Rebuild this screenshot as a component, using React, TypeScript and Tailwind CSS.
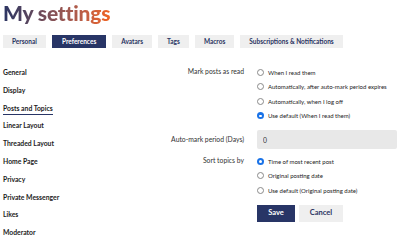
import { useState } from 'react';

const tabs = ['Personal', 'Preferences', 'Avatars', 'Tags', 'Macros', 'Subscriptions & Notifications'];

const sideItems = [
  'General',
  'Display',
  'Posts and Topics',
  'Linear Layout',
  'Threaded Layout',
  'Home Page',
  'Privacy',
  'Private Messenger',
  'Likes',
  'Moderator',
];

const markOptions = [
  'When I read them',
  'Automatically, after auto-mark period expires',
  'Automatically, when I log off',
  'Use default (When I read them)',
];

const sortOptions = ['Time of most recent post', 'Original posting date', 'Use default (Original posting date)'];

function Radio({ label, checked, onClick }: { label: string; checked: boolean; onClick: () => void }) {
  return (
    <label className="flex h-[14.5px] cursor-pointer items-center gap-[4px]" onClick={onClick}>
      {checked ? (
        <span className="flex h-[7px] w-[7px] items-center justify-center rounded-full bg-[#1a73e8]">
          <span className="h-[2.5px] w-[2.5px] rounded-full bg-white" />
        </span>
      ) : (
        <span className="h-[7px] w-[7px] rounded-full border border-[#8a8a8a] bg-white" />
      )}
      <span className="text-[6px] text-[#222]">{label}</span>
    </label>
  );
}

export default function App() {
  const [mark, setMark] = useState(3);
  const [sort, setSort] = useState(0);

  return (
    <div className="h-[242px] w-[400px] overflow-hidden bg-white font-['Lato','Open_Sans',sans-serif]">
      {/* Title */}
      <div className="flex pl-[3px] pt-[1px]">
        <h1 className="bg-gradient-to-r from-[#2a3462] to-[#f0641f] bg-clip-text pb-[2px] text-[21px] font-black leading-[24px] tracking-[-0.2px] text-transparent">
          My settings
        </h1>
      </div>

      {/* Tabs */}
      <div className="ml-[3px] mt-[8px] flex gap-[6px]">
        {tabs.map((t) => (
          <div
            key={t}
            className={
              t === 'Preferences'
                ? 'flex h-[13px] items-center bg-[#283566] px-[10px] text-[6.5px] font-bold text-white'
                : 'flex h-[13px] items-center bg-[#efefef] px-[9px] text-[6.5px] font-bold text-[#2a3462]'
            }
          >
            {t}
          </div>
        ))}
      </div>

      <div className="mt-[17px] flex">
        {/* Sidebar */}
        <div className="flex w-[140px] flex-col pl-[3px]">
          {sideItems.map((s) => (
            <div key={s} className="flex h-[17.8px] items-start pt-[3px]">
              <span
                className={
                  s === 'Posts and Topics'
                    ? 'border-b-[1.5px] border-[#283566] pb-[2px] text-[6.8px] font-bold leading-[8px] text-[#1c1c1c]'
                    : 'text-[6.8px] font-bold leading-[8px] text-[#1c1c1c]'
                }
              >
                {s}
              </span>
            </div>
          ))}
        </div>

        {/* Main form */}
        <div className="flex flex-1 flex-col">
          <div className="flex">
            <div className="w-[117px] pr-[13px] pt-[1px] text-right text-[6.8px] text-[#333]">Mark posts as read</div>
            <div className="flex flex-col">
              {markOptions.map((o, i) => (
                <Radio key={o} label={o} checked={mark === i} onClick={() => setMark(i)} />
              ))}
            </div>
          </div>

          <div className="mt-[7px] flex items-center">
            <div className="w-[117px] pr-[13px] text-right text-[6.8px] text-[#333]">Auto-mark period (Days)</div>
            <input
              defaultValue="0"
              className="h-[19px] w-[140px] rounded-[2px] bg-[#e8e8e8] px-[6px] text-[6.8px] text-[#333] outline-none"
            />
          </div>

          <div className="mt-[5px] flex">
            <div className="w-[117px] pr-[13px] pt-[1px] text-right text-[6.8px] text-[#333]">Sort topics by</div>
            <div className="flex flex-col">
              {sortOptions.map((o, i) => (
                <Radio key={o} label={o} checked={sort === i} onClick={() => setSort(i)} />
              ))}
            </div>
          </div>

          <div className="ml-[117px] mt-[7px] flex gap-[4px]">
            <button className="h-[17px] w-[38px] bg-[#283566] text-[7.5px] font-bold text-white">Save</button>
            <button className="h-[17px] w-[44px] bg-[#efefef] text-[7.5px] font-bold text-[#2a3462]">Cancel</button>
          </div>
        </div>
      </div>
    </div>
  );
}
